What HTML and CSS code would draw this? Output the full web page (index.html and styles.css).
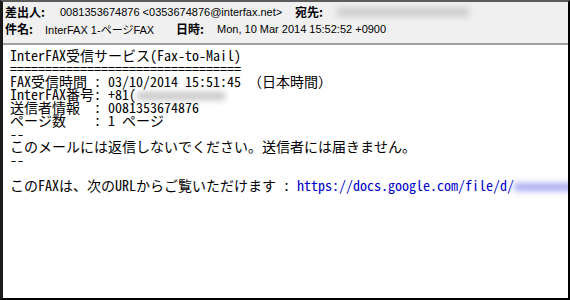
FILE: index.html
```html
<!DOCTYPE html>
<html lang="ja">
<head>
<meta charset="utf-8">
<title>InterFAX 1-ページFAX</title>
<link rel="stylesheet" href="styles.css">
</head>
<body>
<div class="frame">
  <div class="header">
    <div class="row">
      <span class="label">差出人:</span>
      <span class="value from">0081353674876 &lt;0353674876@interfax.net&gt;</span>
      <span class="label to-label">宛先:</span>
      <span class="blur blur-to"></span>
    </div>
    <div class="row">
      <span class="label">件名:</span>
      <span class="value subject">InterFAX 1-ページFAX</span>
      <span class="label date-label">日時:</span>
      <span class="value">Mon, 10 Mar 2014 15:52:52 +0900</span>
    </div>
  </div>
  <div class="body"><div class="line">InterFAX受信サービス(Fax-to-Mail)</div><div class="line">=================================</div><div class="line">FAX受信時間 : 03/10/2014 15:51:45 （日本時間）</div><div class="line">InterFAX番号: +81(<span class="blur blur-num"></span></div><div class="line">送信者情報  : 0081353674876</div><div class="line">ページ数    : 1 ページ</div><div class="line">--</div><div class="line">このメールには返信しないでください。送信者には届きません。</div><div class="line">--</div><div class="line"> </div><div class="line">このFAXは、次のURLからご覧いただけます : <span class="link">https://docs.google.com/file/d/<span class="blur blur-link"></span></span></div></div>
</div>
</body>
</html>
```

FILE: styles.css
```css
html, body {
  margin: 0;
  padding: 0;
  width: 570px;
  height: 300px;
  overflow: hidden;
  background: #ffffff;
}

.frame {
  box-sizing: border-box;
  width: 570px;
  height: 300px;
  border-top: 2px solid #5c5c5c;
  border-left: 3px solid #1a1a1a;
  border-right: 2px solid #000000;
  border-bottom: 2px solid #000000;
  display: flex;
  flex-direction: column;
  position: relative;
  overflow: hidden;
}

.frame::before {
  content: "";
  position: absolute;
  left: -3px;
  top: -2px;
  bottom: -2px;
  width: 1px;
  background: #8a8a8a;
}

.header {
  background: #f0f0f0;
  border-bottom: 2px solid #a0a0a0;
  height: 40px;
  padding: 1px 0 0 2px;
  box-sizing: content-box;
  font-family: "Liberation Sans", "Noto Sans CJK JP", sans-serif;
  font-size: 11px;
  color: #000;
}

.row {
  display: flex;
  align-items: center;
  height: 17px;
  white-space: nowrap;
}

.label {
  font-family: "Noto Sans CJK JP", sans-serif;
  font-weight: bold;
  font-size: 12px;
  width: 55px;
  flex: none;
}

.row:nth-child(2) .label:first-child {
  width: 40px;
}

.from {
  width: 235px;
}

.to-label {
  width: 40px;
}

.subject {
  width: 131px;
}

.date-label {
  width: 41px;
}

.blur {
  display: inline-block;
  filter: blur(3px);
}

.blur-to {
  width: 132px;
  height: 10px;
  background: #cfcfcf;
  margin-left: 2px;
}

.blur-num {
  width: 88px;
  height: 8px;
  background: #c6c6c6;
  vertical-align: middle;
  margin-left: 1px;
}

.blur-link {
  width: 60px;
  height: 8px;
  background: #a8a8f0;
  vertical-align: middle;
}

.body {
  flex: 1;
  background: #ffffff;
  padding: 4px 0 0 7px;
  font-family: "Noto Sans Mono CJK JP", "Liberation Mono", "Noto Sans CJK JP", monospace;
  font-size: 14px;
  line-height: 13px;
  color: #000;
}

.line {
  white-space: pre;
  height: 13px;
}

.link {
  color: #0000cc;
}
```
